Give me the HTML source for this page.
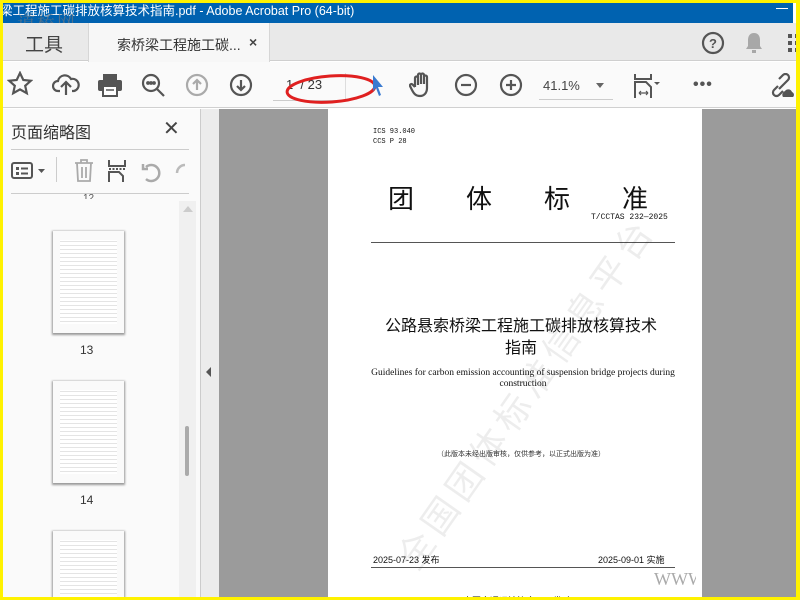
<!DOCTYPE html>
<html><head><meta charset="utf-8"><style>
*{margin:0;padding:0;box-sizing:border-box}
body{width:800px;height:600px;overflow:hidden;background:#fff200;position:relative;font-family:"Liberation Sans","Noto Sans CJK SC",sans-serif}
.a{position:absolute}
.ic{position:absolute;stroke:#555;fill:none;stroke-width:2.2}
</style></head><body>
<div class="a" style="left:3px;top:3px;width:793px;height:594px;background:#fff;overflow:hidden">
<!-- title bar -->
<div class="a" style="left:0;top:0;width:793px;height:20px;background:#0062b0;color:#fff;font-size:12.5px;line-height:16px;white-space:nowrap;left:-3px">梁工程施工碳排放核算技术指南.pdf - Adobe Acrobat Pro (64-bit)</div>
<div class="a" style="left:773px;top:5px;width:12px;height:1px;background:#fff"></div>
<div class="a" style="left:14px;top:6px;color:rgba(110,120,130,.7);font-size:18px;font-family:'Noto Serif CJK SC',serif;letter-spacing:2px">道桥网</div>
<!-- tab bar -->
<div class="a" style="left:0;top:20px;width:793px;height:38px;background:#e9e9e9;border-bottom:1px solid #cfcfcf"></div>
<div class="a" style="left:22px;top:27px;font-size:19px;color:#444">工具</div>
<div class="a" style="left:85px;top:20px;width:182px;height:39px;background:#f7f7f7;border-left:1px solid #d6d6d6;border-right:1px solid #d6d6d6"></div>
<div class="a" style="left:114px;top:32px;font-size:14px;color:#333">索桥梁工程施工碳...</div>
<div class="a" style="left:246px;top:31px;font-size:14px;color:#444;font-weight:bold">×</div>
<svg class="ic" style="left:698px;top:28px" width="24" height="24"><circle cx="12" cy="12" r="10"/><text x="12" y="17" font-size="13" text-anchor="middle" fill="#555" stroke="none" font-weight="bold">?</text></svg>
<svg class="a" style="left:740px;top:28px" width="22" height="24"><path d="M11 2c-4 0-6 3-6 7v6l-2 3h16l-2-3V9c0-4-2-7-6-7z" fill="#a8a8a8"/><rect x="9" y="19" width="4" height="3" fill="#a8a8a8"/></svg>
<svg class="a" style="left:785px;top:31px" width="10" height="20"><rect x="0" y="0" width="4" height="4" fill="#555"/><rect x="0" y="7" width="4" height="4" fill="#555"/><rect x="0" y="14" width="4" height="4" fill="#555"/><rect x="7" y="0" width="4" height="4" fill="#555"/><rect x="7" y="7" width="4" height="4" fill="#555"/><rect x="7" y="14" width="4" height="4" fill="#555"/></svg>
<!-- toolbar -->
<div class="a" style="left:0;top:59px;width:793px;height:46px;background:#fafafa;border-bottom:1px solid #d0d0d0"></div>
<svg class="ic" style="left:4px;top:68px" width="26" height="26"><path d="M13 2l3.3 7 7.5.8-5.6 5 1.6 7.4L13 18.4 6.2 22.2l1.6-7.4-5.6-5 7.5-.8z"/></svg>
<svg class="ic" style="left:49px;top:68px" width="28" height="26"><path d="M8 20H6a5 5 0 010-10 7 7 0 0113-2 5 5 0 013 12h-2"/><path d="M14 24V12M9 16l5-5 5 5"/></svg>
<svg class="a" style="left:94px;top:70px" width="26" height="24"><rect x="6" y="1" width="14" height="6" fill="#555"/><rect x="1" y="7" width="24" height="11" rx="2" fill="#555"/><rect x="6" y="13" width="14" height="10" fill="#fff" stroke="#555" stroke-width="2"/><line x1="9" y1="17" x2="17" y2="17" stroke="#555" stroke-width="1.5"/></svg>
<svg class="ic" style="left:138px;top:70px" width="26" height="26"><circle cx="10" cy="10" r="8"/><path d="M16 16l7 7"/><circle cx="7" cy="10" r=".8" fill="#555"/><circle cx="10" cy="10" r=".8" fill="#555"/><circle cx="13" cy="10" r=".8" fill="#555"/></svg>
<svg class="ic" style="left:182px;top:70px;stroke:#aaa" width="24" height="24"><circle cx="12" cy="12" r="10"/><path d="M12 17V7M8 11l4-4 4 4"/></svg>
<svg class="ic" style="left:226px;top:70px" width="24" height="24"><circle cx="12" cy="12" r="10"/><path d="M12 7v10M8 13l4 4 4-4"/></svg>
<div class="a" style="left:270px;top:97px;width:70px;height:1px;background:#ccc"></div>
<div class="a" style="left:283px;top:74px;font-size:13px;color:#333">1&nbsp;&nbsp;/ 23</div>
<div class="a" style="left:342px;top:70px;width:1px;height:28px;background:#ddd"></div>
<svg class="a" style="left:280px;top:66px" width="100" height="40"><ellipse cx="48" cy="20" rx="44" ry="13" fill="none" stroke="#e02020" stroke-width="3" transform="rotate(-4 48 20)"/></svg>
<svg class="a" style="left:368px;top:70px" width="14" height="24"><path d="M2 2l10 12-5 0 3 8-2 1-3-8-3 3z" fill="#3a7ad0"/></svg>
<svg class="ic" style="left:406px;top:68px" width="24" height="28"><path d="M6 16V7a1.5 1.5 0 013 0v7M9 13V4a1.5 1.5 0 013 0v9M12 13V4a1.5 1.5 0 013 0v9M15 13V6a1.5 1.5 0 013 0v11c0 5-3 8-7 8s-6-2-8-6l-2-4a1.5 1.5 0 012.5-1.5L6 16"/></svg>
<svg class="ic" style="left:451px;top:70px" width="24" height="24"><circle cx="12" cy="12" r="10"/><path d="M7 12h10"/></svg>
<svg class="ic" style="left:496px;top:70px" width="24" height="24"><circle cx="12" cy="12" r="10"/><path d="M7 12h10M12 7v10"/></svg>
<div class="a" style="left:540px;top:75px;font-size:13px;color:#444">41.1%</div>
<div class="a" style="left:593px;top:80px;border:4px solid transparent;border-top:5px solid #666"></div>
<div class="a" style="left:536px;top:96px;width:74px;height:1px;background:#ccc"></div>
<svg class="ic" style="left:630px;top:70px;stroke-width:2" width="30" height="26"><path d="M2 1v5h16V1"/><path d="M2 25V9h11l5 5v11"/><path d="M6 20h9M6 20l2-2M6 20l2 2M15 20l-2-2M15 20l-2 2" stroke-width="1.2"/><path d="M21 9h6l-3 3z" fill="#555" stroke="none"/></svg>
<div class="a" style="left:690px;top:73px;font-size:16px;color:#555;letter-spacing:1px;font-weight:bold">•••</div>
<svg class="ic" style="left:766px;top:70px" width="28" height="26"><path d="M9 13l-4 4a3.5 3.5 0 005 5l4-4M15 11l4-4a3.5 3.5 0 00-5-5l-4 4M10 16l6-6"/><path d="M14 24a4 4 0 012-6 4 4 0 017 1 3 3 0 011 5z" fill="#555" stroke="none"/></svg>
<!-- left panel -->
<div class="a" style="left:0;top:106px;width:197px;height:490px;background:#fafafa"></div>
<div class="a" style="left:8px;top:116px;font-size:16px;color:#333">页面缩略图</div>
<div class="a" style="left:160px;top:113px;font-size:20px;color:#444">✕</div>
<div class="a" style="left:8px;top:146px;width:178px;height:1px;background:#ccc"></div>
<svg class="a" style="left:8px;top:158px" width="36" height="20"><rect x="1" y="2" width="20" height="15" rx="2" fill="none" stroke="#555" stroke-width="2"/><rect x="5" y="6" width="3" height="3" fill="#555"/><rect x="5" y="11" width="3" height="3" fill="#555"/><line x1="10" y1="7.5" x2="17" y2="7.5" stroke="#555" stroke-width="2"/><line x1="10" y1="12.5" x2="17" y2="12.5" stroke="#555" stroke-width="2"/><path d="M27 8h7l-3.5 4z" fill="#555"/></svg>
<div class="a" style="left:53px;top:154px;width:1px;height:25px;background:#ccc"></div>
<svg class="ic" style="left:70px;top:156px;stroke:#aaa;stroke-width:1.8" width="22" height="24"><path d="M2 4h18M8 4V1h6v3M4 4l1 18h12l1-18M9 8v11M13 8v11"/></svg>
<svg class="ic" style="left:104px;top:157px;stroke-width:2" width="22" height="22"><path d="M2 0v6h16V0M2 22V12h10l4 4v6"/><path d="M2 9h16" stroke-dasharray="2 1.5"/></svg>
<svg class="ic" style="left:137px;top:158px;stroke:#aaa;stroke-width:2.5" width="22" height="22"><path d="M6 18a8 8 0 100-12M3 3v5h5"/></svg>
<svg class="ic" style="left:170px;top:158px;stroke:#bbb;stroke-width:2.5" width="14" height="22"><path d="M12 4a8 8 0 00-8 8"/></svg>
<div class="a" style="left:8px;top:190px;width:178px;height:1px;background:#ccc"></div>
<div class="a" style="left:80px;top:190px;font-size:10px;color:#555;height:6px;overflow:hidden">12</div>
<div class="a" style="left:176px;top:198px;width:17px;height:398px;background:#f0f0f0"></div>
<div class="a" style="left:180px;top:203px;border:5px solid transparent;border-bottom:6px solid #ccc;border-top:0"></div>
<div class="a" style="left:182px;top:423px;width:4px;height:50px;background:#aaa;border-radius:2px"></div>
<div class="a" style="left:49px;top:227px;width:73px;height:104px;background:#fff;box-shadow:0 1px 2px #999;background-image:repeating-linear-gradient(#fff 0 3px,#e4e4e4 3px 4px);background-clip:content-box;padding:10px 8px"></div>
<div class="a" style="left:77px;top:340px;font-size:12px;color:#333">13</div>
<div class="a" style="left:49px;top:377px;width:73px;height:104px;background:#fff;box-shadow:0 1px 2px #999;background-image:repeating-linear-gradient(#fff 0 3px,#e4e4e4 3px 4px);background-clip:content-box;padding:10px 8px"></div>
<div class="a" style="left:77px;top:490px;font-size:12px;color:#333">14</div>
<div class="a" style="left:49px;top:527px;width:73px;height:80px;background:#fff;box-shadow:0 1px 2px #999;background-image:repeating-linear-gradient(#fff 0 3px,#e4e4e4 3px 4px);background-clip:content-box;padding:10px 8px"></div>
<!-- divider -->
<div class="a" style="left:197px;top:106px;width:1px;height:490px;background:#ccc"></div>
<div class="a" style="left:198px;top:106px;width:18px;height:490px;background:#ececec"></div>
<div class="a" style="left:203px;top:364px;border:5px solid transparent;border-right:5px solid #555;border-left:0"></div>
<!-- canvas -->
<div class="a" style="left:216px;top:106px;width:577px;height:490px;background:#9b9b9b"></div>
<div class="a" style="left:325px;top:106px;width:374px;height:490px;background:#fff;color:#111;overflow:hidden">
 <div class="a" style="left:45px;top:18px;font-size:7px;font-family:'Liberation Mono',monospace;line-height:10px">ICS 93.040<br>CCS P 28</div>
 <div class="a" style="left:60px;top:70px;font-size:26px;font-family:'Noto Sans CJK SC',sans-serif;white-space:nowrap;letter-spacing:52px">团体标准</div>
 <div class="a" style="left:263px;top:104px;font-size:8px;font-family:'Liberation Mono',monospace">T/CCTAS 232—2025</div>
 <div class="a" style="left:43px;top:133px;width:304px;height:1px;background:#555"></div>
 <div class="a" style="left:0;top:204px;width:374px;text-align:center;font-size:16px;line-height:22px;font-family:'Noto Sans CJK SC',sans-serif;padding-left:12px">公路悬索桥梁工程施工碳排放核算技术<br>指南</div>
 <div class="a" style="left:40px;top:259px;width:310px;text-align:center;font-size:9.5px;line-height:11px;font-family:'Liberation Serif',serif">Guidelines for carbon emission accounting of suspension bridge projects during construction</div>
 <div class="a" style="left:0;top:340px;width:374px;text-align:center;font-size:7px;color:#333;padding-left:12px">（此版本未经出版审核，仅供参考，以正式出版为准）</div>
 <div class="a" style="left:55px;top:440px;font-size:36px;color:rgba(0,0,0,.07);transform:rotate(-55deg);transform-origin:left top;white-space:nowrap;letter-spacing:6px">全国团体标准信息平台</div>
 <div class="a" style="left:45px;top:444px;font-size:9px">2025-07-23 发布</div>
 <div class="a" style="left:270px;top:444px;font-size:9px">2025-09-01 实施</div>
 <div class="a" style="left:43px;top:458px;width:304px;height:1px;background:#555"></div>
 <div class="a" style="left:135px;top:485px;font-size:9px">中国交通运输协会　　发 布</div>
</div>
<div class="a" style="left:651px;top:566px;font-size:18px;color:#aaa;font-family:'Liberation Serif',serif;width:42px;overflow:hidden;white-space:nowrap">WWW.C</div>
</div>
</body></html>
